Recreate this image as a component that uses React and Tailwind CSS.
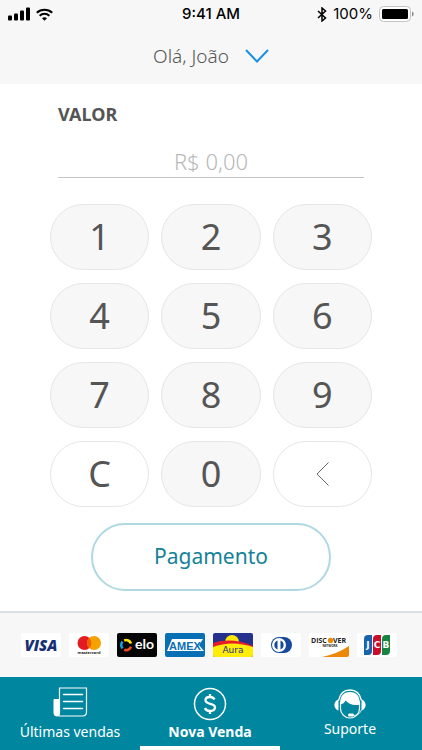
import React, { useState } from "react";

const keys = ["1", "2", "3", "4", "5", "6", "7", "8", "9", "C", "0", "<"];

function StatusBar() {
  return (
    <div className="grid h-7 grid-cols-3 items-center px-2 font-['Inter',sans-serif] text-base leading-5 text-black">
      <div className="flex items-center gap-1.5">
        <svg width="22" height="14" viewBox="0 0 22 14" aria-hidden="true">
          <rect x="0" y="8.5" width="4" height="5" rx="1" />
          <rect x="6" y="6.5" width="4" height="7" rx="1" />
          <rect x="12" y="3.5" width="4" height="10" rx="1" />
          <rect x="18" y="0.5" width="4" height="13" rx="1" />
        </svg>
        <svg width="17" height="13" viewBox="0 0 17 13" fill="none" stroke="black" strokeWidth="2" aria-hidden="true">
          <path d="M.8 4.7a11.3 11.3 0 0 1 15.4 0M3.6 7.7a7.3 7.3 0 0 1 9.8 0" />
          <path d="M6 10.2a3.9 3.9 0 0 1 5 0L8.5 12.7z" fill="black" stroke="none" />
        </svg>
      </div>
      <div className="text-center text-[15px] font-medium whitespace-nowrap">9:41 AM</div>
      <div className="flex items-center justify-end gap-1.5">
        <svg width="10" height="15" viewBox="0 0 10 15" fill="none" stroke="black" strokeWidth="1.5" aria-hidden="true">
          <path d="M1 4l7.5 7L5 14V1l3.5 3L1 11" />
        </svg>
        <span className="text-[15px]">100%</span>
        <svg width="35" height="16" viewBox="0 0 35 16" aria-hidden="true">
          <rect x=".5" y=".5" width="31" height="15" rx="4" fill="white" stroke="#c4c4c4" />
          <rect x="3" y="3" width="26" height="10" rx="1.5" />
          <path d="M33 5.5c2.2.8 2.2 4.2 0 5z" fill="#888" />
        </svg>
      </div>
    </div>
  );
}

function Cards() {
  const card = "h-6 w-10 shrink-0";
  const text = "'Open Sans', sans-serif";
  return (
    <div className="flex justify-center gap-2 border-t-2 border-[#dddfe6] bg-[#f7f7f7] py-5 pr-1">
      <svg className={card} viewBox="0 0 40 24" role="img" aria-label="Visa">
        <rect width="40" height="24" rx="2" fill="white" />
        <text x="20" y="18" textAnchor="middle" fontFamily={text} fontSize="15" fontWeight="800" fontStyle="italic" fill="#172f75">VISA</text>
      </svg>
      <svg className={card} viewBox="0 0 40 24" role="img" aria-label="Mastercard">
        <rect width="40" height="24" rx="2" fill="white" />
        <circle cx="15.5" cy="10" r="7" fill="#e51b23" />
        <circle cx="25" cy="10" r="7" fill="#f5a100" />
        <path d="M20.25 4.9a7 7 0 0 1 0 10.2 7 7 0 0 1 0-10.2" fill="#f06000" />
        <text x="20" y="21" textAnchor="middle" fontFamily={text} fontSize="4" fontWeight="700" fill="#222">mastercard</text>
      </svg>
      <svg className={card} viewBox="0 0 40 24" role="img" aria-label="Elo">
        <rect width="40" height="24" rx="2" fill="#050505" />
        <g fill="none" strokeWidth="2.6">
          <path d="M7.2 7.5a5 5 0 0 1 6.8 3" stroke="#ffe20a" />
          <path d="M14 13.8a5 5 0 0 1-6.8 2.8" stroke="#f04b25" />
          <path d="M5.6 15.4a5 5 0 0 1 0-6.8" stroke="#12a5dc" />
        </g>
        <text x="27.500" y="16" textAnchor="middle" fontFamily="Lato, sans-serif" fontSize="14" fontWeight="700" fill="white">elo</text>
      </svg>
      <svg className={card} viewBox="0 0 40 24" role="img" aria-label="Amex">
        <rect width="40" height="24" rx="2" fill="#086fb5" />
        <path d="M2 18L7 6h31l-4 6 5 6z" fill="white" />
        <text x="20" y="16.500" textAnchor="middle" fontFamily="'Liberation Sans', sans-serif" fontSize="11" fontWeight="700" fill="#086fb5">AMEX</text>
      </svg>
      <svg className={card} viewBox="0 0 40 24" role="img" aria-label="Aura">
        <rect width="40" height="24" rx="2" fill="#24328d" />
        <circle cx="19" cy="9" r="7" fill="#ffe70a" />
        <path d="M0 10Q19 4 40 13V16H0z" fill="#e51d27" />
        <path d="M0 14Q19 7 40 14V22a2 2 0 0 1-2 2H2a2 2 0 0 1-2-2z" fill="#ffec08" />
        <text x="20" y="20" textAnchor="middle" fontFamily="'DejaVu Sans', sans-serif" fontSize="9" fill="#24328d">Aura</text>
      </svg>
      <svg className={card} viewBox="0 0 40 24" role="img" aria-label="Diners Club">
        <rect width="40" height="24" rx="2" fill="white" />
        <rect x="10" y="4" width="21" height="16" rx="8" fill="#16499b" />
        <circle cx="18" cy="12" r="7" fill="white" />
        <path d="M16.5 7.5v9a4.8 4.8 0 0 1 0-9m3 0v9a4.8 4.8 0 0 0 0-9" fill="#16499b" />
      </svg>
      <svg className={card} viewBox="0 0 40 24" role="img" aria-label="Discover">
        <rect width="40" height="24" rx="2" fill="white" />
        <path d="M13 24Q28 21 40 13v9a2 2 0 0 1-2 2z" fill="#ed8708" />
        <g fontFamily={text} fontWeight="700" fill="#222">
          <text x="2" y="10" fontSize="7">DISC</text>
          <text x="24" y="10" fontSize="7">VER</text>
          <text x="21" y="14" textAnchor="middle" fontSize="3">NETWORK</text>
        </g>
        <circle cx="21.5" cy="7.5" r="2.7" fill="#ed8708" />
      </svg>
      <svg className={card} viewBox="0 0 40 24" role="img" aria-label="JCB">
        <rect width="40" height="24" rx="2" fill="white" />
        <path d="M7 6q0-4 4-4h4v16q0 4-4 4H7z" fill="#1764ad" />
        <path d="M16 6q0-4 4-4h4v16q0 4-4 4h-4z" fill="#c8102e" />
        <path d="M25 6q0-4 4-4h4v16q0 4-4 4h-4z" fill="#168541" />
        <g fontFamily="'DejaVu Sans', sans-serif" fontSize="9" fontWeight="700" fill="white" textAnchor="middle">
          <text x="11" y="15">J</text>
          <text x="20" y="15">C</text>
          <text x="29" y="15">B</text>
        </g>
      </svg>
    </div>
  );
}

function ReceiptIcon() {
  return (
    <svg width="35" height="30" viewBox="0 0 35 30" fill="none" stroke="white" aria-hidden="true">
      <path d="M6.5 1h27v24q0 4-4 4h-25q2 0 2-4z" strokeWidth="1.2" />
      <path d="M6 12.5v12.5q0 4-2.5 4T1 26V12.5z" fill="white" />
      <path d="M10.5 7.5h19M10.5 14.5h19M10.5 21.5h19" strokeWidth="1.5" strokeLinecap="round" />
    </svg>
  );
}

function DollarIcon() {
  return (
    <svg width="34" height="34" viewBox="0 0 34 34" fill="none" stroke="white" aria-hidden="true">
      <circle cx="17" cy="17" r="15.5" strokeWidth="1.5" />
      <path d="M21.5 12.5c-1-2-2.500-2.500-4.500-2.500-2.500 0-4.500 1.200-4.500 3.300 0 4.700 9.500 2.300 9.500 7 0 2.500-2 3.700-5 3.700-2.500 0-4.200-.8-5-3M17 7v3m0 14v3" strokeWidth="2.3" />
    </svg>
  );
}

function SupportIcon() {
  return (
    <svg width="32" height="30" viewBox="0 0 32 30" fill="none" stroke="white" aria-hidden="true">
      <path d="M4.5 11.5C6 4.500 10 1 16 1s10 3.500 11.500 10.500" strokeWidth="1.3" />
      <path d="M4.5 10.500C-1 12-1 20 4.500 21.500zm23 0c5.500 1.500 5.500 9.500 0 11z" fill="white" stroke="none" />
      <path d="M6.5 13v6.500c0 5 4 9.500 9.500 9.500s9.500-4.500 9.500-9.500V13" strokeWidth="1.2" />
      <path d="M6 15.500C6 7 9.500 3 16 3s10 4 10 12.500c-6.500 1.500-11.500-.5-14.500-4-1 2.500-2.500 3.500-5.500 4z" fill="white" stroke="none" />
      <path d="M27.500 20.500c-1 3.500-3.500 6-8 6" strokeWidth=".8" />
      <rect x="14" y="24.500" width="6" height="3" rx="1.5" fill="white" stroke="none" />
    </svg>
  );
}

export default function App() {
  const [amount, setAmount] = useState("");
  const press = (key) => {
    if (key === "C") setAmount("");
    else if (key === "<") setAmount(amount.slice(0, -1));
    else setAmount(amount + key);
  };

  return (
    <div className="flex min-h-screen flex-col bg-white font-['Noto_Sans',sans-serif] text-[#555]">
      <header className="bg-[#f7f7f7]">
        <StatusBar />
        <button type="button" className="mx-auto flex h-14 items-center gap-4 text-[19px] font-light">
          <span>Olá, João</span>
          <svg width="24" height="14" viewBox="0 0 24 14" fill="none" stroke="#1b91df" strokeWidth="2" aria-hidden="true">
            <path d="M1 1l11 11.500L23 1" />
          </svg>
        </button>
      </header>
      <main className="flex grow flex-col px-12">
        <div className="mx-2.5 pt-4">
          <label htmlFor="amount" className="block text-lg leading-7 font-bold">VALOR</label>
          <input id="amount" inputMode="numeric" value={amount} onChange={(e) => setAmount(e.target.value)} placeholder="R$ 0,00" className="mt-4 block h-[34px] w-full border-b border-[#c4c4c4] text-center text-[22px] font-light outline-none placeholder:text-[#b8b8b8]" />
        </div>
        <div className="mx-0.5 mt-[26px] grid grid-cols-3 gap-x-3 gap-y-[13px]">
          {keys.map((key) => (
            <button key={key} type="button" onClick={() => press(key)} aria-label={key === "<" ? "Apagar" : key} className={`flex h-[66px] items-center justify-center rounded-full border border-[#e6e6e6] text-4xl ${key === "C" || key === "<" ? "bg-white" : "bg-[#f7f7f7]"}`}>
              {key === "<" ? (
                <svg width="13" height="24" viewBox="0 0 13 24" fill="none" stroke="#666" aria-hidden="true"><path d="M12.500.5L1 12l11.500 11.500" /></svg>
              ) : key}
            </button>
          ))}
        </div>
        <button type="button" className="mx-auto mt-4 h-[68px] w-60 rounded-full border-2 border-[#b0d8e1] text-[21px] text-[#158299]">Pagamento</button>
      </main>
      <Cards />
      <nav className="grid h-[73px] grid-cols-3 bg-[#00879f] pr-0.5 text-center text-sm leading-5 text-white">
        <a href="#vendas" className="flex flex-col items-center justify-between pt-2.5 pb-2 whitespace-nowrap"><ReceiptIcon /><span>Últimas vendas</span></a>
        <a href="#nova" aria-current="page" className="flex flex-col items-center justify-between border-b-4 border-white pt-2.5 pb-1 font-bold whitespace-nowrap"><DollarIcon /><span>Nova Venda</span></a>
        <a href="#suporte" className="flex flex-col items-center pt-3 whitespace-nowrap"><SupportIcon /><span>Suporte</span></a>
      </nav>
    </div>
  );
}
